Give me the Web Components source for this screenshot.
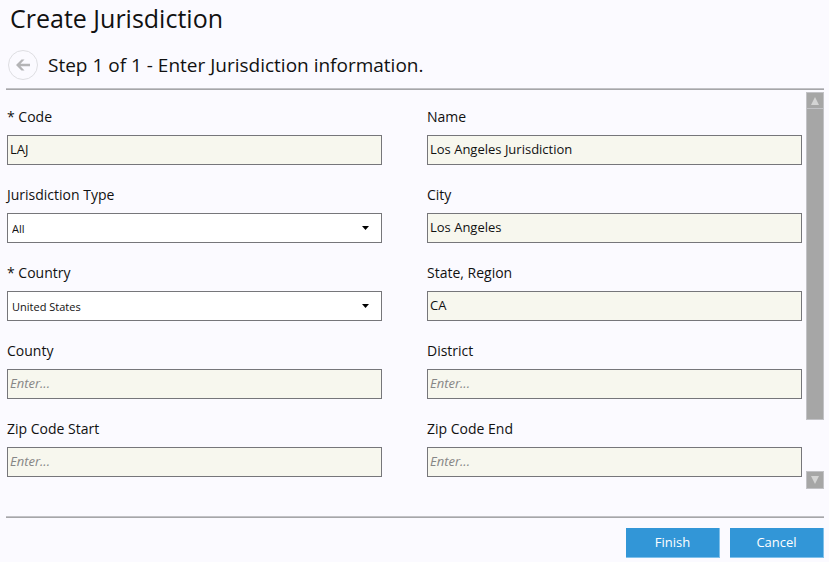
<!DOCTYPE html>
<html lang="en">
<head>
<meta charset="utf-8">
<title>Create Jurisdiction</title>
<style>
html, body { height: 100%; }
body { margin: 0; background: #fbfaff; color: #111; font-family: "Open Sans", "Noto Sans", sans-serif; font-size: 14px; }
</style>
</head>
<body>
<wizard-page heading="Create Jurisdiction">
  <step-header slot="step">Step 1 of 1 - Enter Jurisdiction information.</step-header>
  <text-field label="* Code" value="LAJ"></text-field>
  <text-field label="Name" value="Los Angeles Jurisdiction"></text-field>
  <select-field label="Jurisdiction Type" value="All"></select-field>
  <text-field label="City" value="Los Angeles"></text-field>
  <select-field label="* Country" value="United States"></select-field>
  <text-field label="State, Region" value="CA"></text-field>
  <text-field label="County"></text-field>
  <text-field label="District"></text-field>
  <text-field label="Zip Code Start"></text-field>
  <text-field label="Zip Code End"></text-field>
  <action-button slot="actions">Finish</action-button>
  <action-button slot="actions">Cancel</action-button>
</wizard-page>
<script>
class Base extends HTMLElement {
  constructor() {
    super();
    this.attachShadow({ mode: "open" });
  }
  connectedCallback() {
    this.shadowRoot.innerHTML = "<style>*{box-sizing:border-box}" + this.constructor.css + "</style>" + this.render();
    this.ready();
  }
  ready() {}
}

customElements.define("scroll-rail", class extends Base {
  static css = `
    :host { display: flex; flex-direction: column; width: 18px; }
    button { flex: none; height: 18px; padding: 0; border: 1px solid #c2c2c6; background: #a6a6a6; display: grid; place-items: center; }
    .track { flex: 1; display: flex; flex-direction: column; }
    .thumb { flex: 0 0 86%; background: #a6a6a6; border: solid #c2c2c6; border-width: 0 1px 1px; }
    svg { display: block; fill: #d4d4d4; }
    .up { height: 17px; }
  `;
  render() {
    return `
    <button class="up" aria-label="Scroll up"><svg width="8" height="8" viewBox="0 0 8 8"><path d="M4 0 8 8H0z"/></svg></button>
    <div class="track"><div class="thumb"></div></div>
    <button aria-label="Scroll down"><svg width="8" height="8" viewBox="0 0 8 8"><path d="M0 0h8L4 8z"/></svg></button>`;
  }
});

customElements.define("step-header", class extends Base {
  static css = `
    :host { display: flex; align-items: center; gap: 10px; padding: 0 2px; font-size: 19px; line-height: 30px; }
    button { flex: none; width: 30px; height: 30px; padding: 0; border: 1px solid #dedee2; border-radius: 50%; background: transparent; display: grid; place-items: center; }
    svg { display: block; }
    h2 { margin: 0; font: inherit; }
  `;
  render() {
    return `
    <button aria-label="Back"><svg width="14" height="12" viewBox="0 0 14 12"><path d="M0 6 5.500.5h3L4.500 4.700H14v2.600H4.500L8.500 11.500h-3z" fill="#b4b4b6"/></svg></button>
    <h2><slot></slot></h2>`;
  }
});

const fieldCss = `
  :host { display: block; min-width: 0; }
  label { display: block; font-size: 14px; line-height: 20px; padding-bottom: 8px; }
  input, select { display: block; width: 100%; height: 30px; margin: 0; border: 1px solid #76767a; border-radius: 0; color: #111; font-family: inherit; }
`;

customElements.define("text-field", class extends Base {
  static css = fieldCss + `
    input { background: #f7f7ee; font-size: 13px; padding: 0 2px 2px; }
    input::placeholder { color: #868686; font-style: italic; opacity: 1; }
  `;
  render() {
    return `<label for="f"></label><input id="f" type="text" placeholder="Enter...">`;
  }
  ready() {
    this.shadowRoot.querySelector("label").textContent = this.getAttribute("label");
    this.shadowRoot.querySelector("input").value = this.getAttribute("value") || "";
  }
});

customElements.define("select-field", class extends Base {
  static css = fieldCss + `
    .box { display: grid; align-items: center; }
    .box > * { grid-area: 1 / 1; }
    select { appearance: none; background: #fff; font-size: 11px; padding: 0 24px 0 4px; }
    svg { justify-self: end; margin-right: 13px; pointer-events: none; }
  `;
  render() {
    return `<label for="f"></label><div class="box"><select id="f"><option></option></select>
    <svg width="7" height="4" viewBox="0 0 7 4"><path d="M0 0h7L3.500 4z"/></svg></div>`;
  }
  ready() {
    this.shadowRoot.querySelector("label").textContent = this.getAttribute("label");
    this.shadowRoot.querySelector("option").textContent = this.getAttribute("value");
  }
});

customElements.define("action-button", class extends Base {
  static css = `
    :host { display: block; }
    button { display: block; min-width: 94px; height: 30px; padding: 0 12px 2px; border: solid #7fc0ea; border-width: 0 1px 1px 0; background: #3296d7; color: #fff; font-family: inherit; font-size: 13px; }
  `;
  render() { return `<button type="button"><slot></slot></button>`; }
});

customElements.define("wizard-page", class extends Base {
  static css = `
    :host { display: flex; flex-direction: column; min-height: 100%; box-sizing: border-box; padding: 0 5px 4px 6px; }
    h1 { margin: 0; padding: 2px 4px 16px; font-size: 25px; line-height: 32px; font-weight: 400; }
    .rule { flex: none; height: 2px; background: #a6a6a9; border-top: 1px solid #c2c2c6; }
    .body { flex: 1; display: flex; gap: 4px; margin: 2px 0 27px; }
    form { flex: 1; display: grid; grid-template-columns: repeat(2, minmax(0, 1fr)); gap: 20px 45px; align-content: start; padding: 15px 0 12px 1px; }
    .head { padding-bottom: 8px; }
    footer { display: flex; justify-content: flex-end; gap: 10px; padding-top: 10px; }
  `;
  render() {
    return `
    <h1></h1>
    <div class="head"><slot name="step"></slot></div>
    <div class="rule"></div>
    <div class="body"><form><slot></slot></form><scroll-rail></scroll-rail></div>
    <div class="rule"></div>
    <footer><slot name="actions"></slot></footer>`;
  }
  ready() { this.shadowRoot.querySelector("h1").textContent = this.getAttribute("heading"); }
});
</script>
</body>
</html>
